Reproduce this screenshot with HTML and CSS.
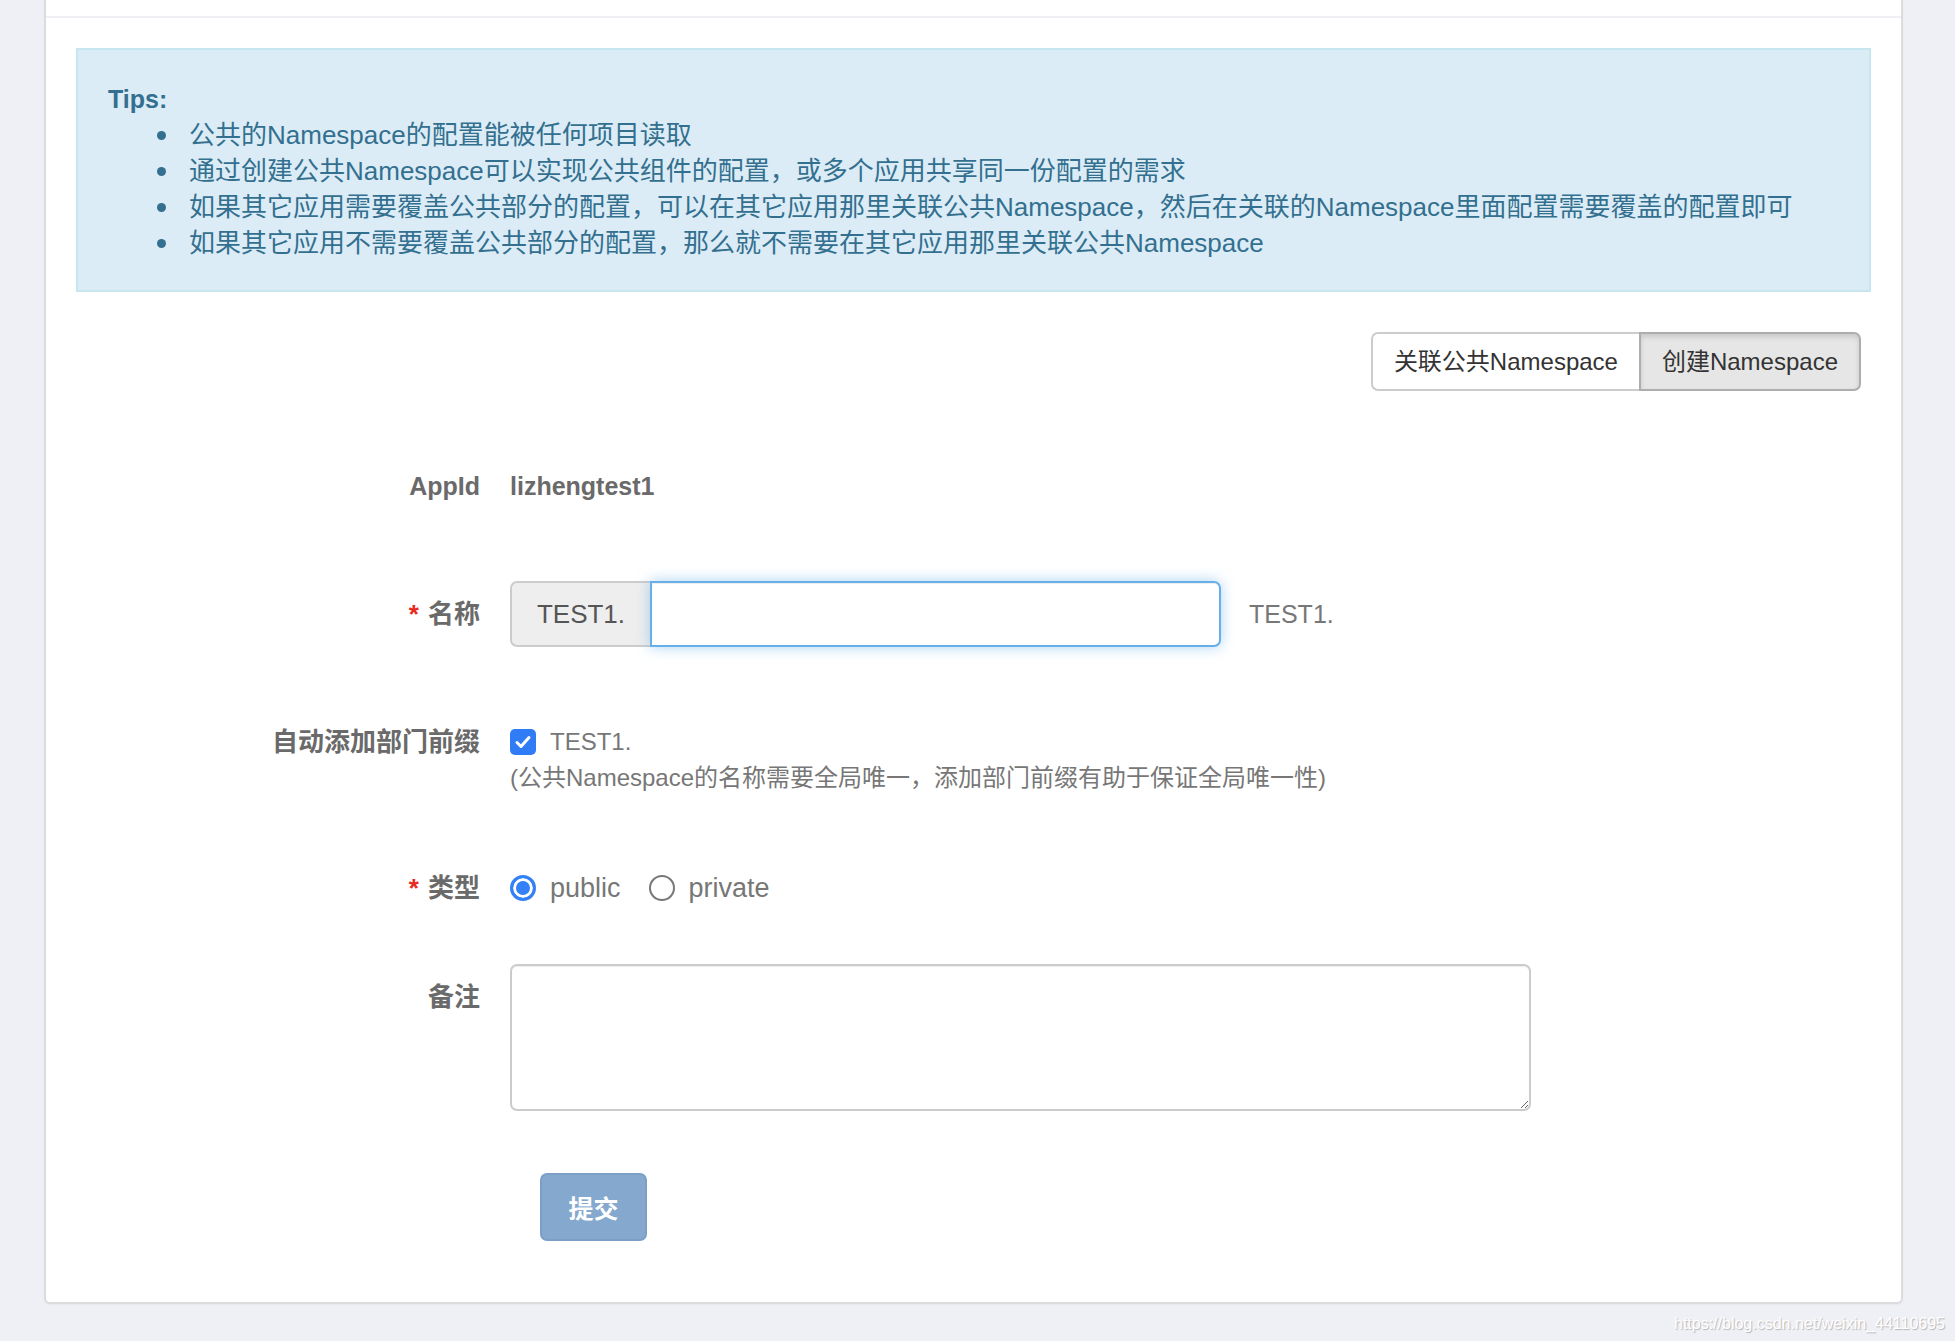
FILE: index.html
```html
<!DOCTYPE html>
<html lang="zh-CN">
<head>
<meta charset="utf-8">
<title>创建Namespace</title>
<link rel="stylesheet" href="styles.css">
</head>
<body>
<div class="panel">
  <div class="panel-heading"></div>
  <div class="panel-body">
    <div class="alert">
      <div class="alert-title">Tips:</div>
      <ul class="alert-list">
        <li>公共的Namespace的配置能被任何项目读取</li>
        <li>通过创建公共Namespace可以实现公共组件的配置，或多个应用共享同一份配置的需求</li>
        <li>如果其它应用需要覆盖公共部分的配置，可以在其它应用那里关联公共Namespace，然后在关联的Namespace里面配置需要覆盖的配置即可</li>
        <li>如果其它应用不需要覆盖公共部分的配置，那么就不需要在其它应用那里关联公共Namespace</li>
      </ul>
    </div>

    <div class="toolbar">
      <div class="btn-group">
        <button class="btn">关联公共Namespace</button>
        <button class="btn active">创建Namespace</button>
      </div>
    </div>

    <form class="form">
      <div class="form-row row-appid">
        <label class="control-label latin">AppId</label>
        <div class="control static">lizhengtest1</div>
      </div>

      <div class="form-row row-name">
        <label class="control-label"><span class="req">*</span> 名称</label>
        <div class="control inline">
          <div class="input-group">
            <span class="addon">TEST1.</span>
            <input class="input focus" type="text">
          </div>
          <span class="muted preview">TEST1.</span>
        </div>
      </div>

      <div class="form-row row-prefix">
        <label class="control-label">自动添加部门前缀</label>
        <div class="control">
          <div class="check-line">
            <span class="checkbox"><svg width="26" height="26" viewBox="0 0 26 26"><path d="M7 13.5 L11 17.5 L19 8.5" fill="none" stroke="#fff" stroke-width="3" stroke-linecap="round" stroke-linejoin="round"/></svg></span>
            <span class="muted small">TEST1.</span>
          </div>
          <div class="help">(公共Namespace的名称需要全局唯一，添加部门前缀有助于保证全局唯一性)</div>
        </div>
      </div>

      <div class="form-row row-type">
        <label class="control-label"><span class="req">*</span> 类型</label>
        <div class="control radios">
          <span class="radio-item"><span class="radio on"></span><span class="muted radio-text">public</span></span>
          <span class="radio-item"><span class="radio"></span><span class="muted radio-text">private</span></span>
        </div>
      </div>

      <div class="form-row row-note">
        <label class="control-label">备注</label>
        <div class="control">
          <textarea class="textarea"></textarea>
        </div>
      </div>

      <div class="form-row row-submit">
        <span></span>
        <div class="control">
          <button type="button" class="btn-submit">提交</button>
        </div>
      </div>
    </form>
  </div>
</div>
<div class="watermark">https://blog.csdn.net/weixin_44110695</div>
</body>
</html>
```

FILE: styles.css
```css
html, body {
  margin: 0;
  padding: 0;
}
body {
  background: #eff0f5;
  font-family: "Liberation Sans", "Noto Sans CJK SC", sans-serif;
  font-size: 25px;
  line-height: 36px;
  color: #333;
  height: 1341px;
  overflow: hidden;
}

.panel {
  margin-left: 44px;
  width: 1859px;
  box-sizing: border-box;
  background: #fff;
  border: 2px solid #dcdcdf;
  border-top: none;
  border-radius: 0 0 6px 6px;
  box-shadow: 0 1px 2px rgba(0,0,0,0.04);
}
.panel-heading {
  height: 16px;
  border-bottom: 2px solid #efeff4;
}
.panel-body {
  padding: 30px 30px 61px 30px;
}

.alert {
  background: #dcecf6;
  border: 2px solid #c6e6f0;
  color: #33708f;
  padding: 31px 30px 29px 30px;
  font-size: 26px;
}
.alert-title {
  font-weight: bold;
  font-size: 25px;
}
.alert-list {
  margin: 0;
  padding-left: 49px;
  list-style: none;
}
.alert-list li {
  display: flex;
  align-items: center;
}
.alert-list li::before {
  content: "";
  flex: none;
  width: 9px;
  height: 9px;
  border-radius: 50%;
  background: #33708f;
  margin-right: 23px;
}

.toolbar {
  margin-top: 40px;
  display: flex;
  justify-content: flex-end;
  padding-right: 10px;
}
.btn-group {
  display: flex;
}
.btn {
  font-family: inherit;
  font-size: 24px;
  line-height: 36px;
  color: #333;
  background: #fff;
  border: 2px solid #cccccc;
  padding: 10px 21px 9px 21px;
  margin: 0;
  cursor: pointer;
}
.btn:first-child {
  border-radius: 7px 0 0 7px;
  border-right: none;
}
.btn.active {
  background: #e6e6e6;
  border-color: #adadad;
  border-radius: 0 7px 7px 0;
  box-shadow: inset 0 3px 5px rgba(0,0,0,0.125);
}

.form-row {
  display: grid;
  grid-template-columns: 404px 1fr;
  column-gap: 30px;
  align-items: center;
}
.control-label {
  text-align: right;
  font-weight: bold;
  color: #6a6a6a;
  font-size: 26px;
}
.control-label.latin {
  font-size: 25px;
}
.req {
  color: #e8291c;
  margin-right: 2px;
}
.static {
  font-weight: bold;
  color: #6a6a6a;
}
.muted {
  color: #777;
}

.row-appid { margin-top: 77px; }
.row-name { margin-top: 77px; }
.row-prefix { margin-top: 77px; align-items: start; }
.row-type { margin-top: 74px; }
.row-note { margin-top: 58px; align-items: start; }
.row-note .control-label { padding-top: 15px; }
.row-submit { margin-top: 62px; }

.inline {
  display: flex;
  align-items: center;
}
.input-group {
  display: flex;
  width: 711px;
  height: 66px;
}
.addon {
  box-sizing: border-box;
  width: 140px;
  display: flex;
  align-items: center;
  justify-content: center;
  background: #eeeeee;
  border: 2px solid #cccccc;
  border-right: none;
  border-radius: 7px 0 0 7px;
  color: #555;
  font-size: 26px;
}
.input {
  flex: 1;
  box-sizing: border-box;
  height: 66px;
  margin: 0;
  border: 2px solid #66afe9;
  border-radius: 0 7px 7px 0;
  outline: none;
  font-family: inherit;
  font-size: 25px;
  padding: 0 22px;
  box-shadow: inset 0 1px 1px rgba(0,0,0,0.075), 0 0 14px rgba(102,175,233,0.55);
}
.preview {
  margin-left: 28px;
}

.check-line {
  display: flex;
  align-items: center;
  gap: 14px;
}
.checkbox {
  width: 26px;
  height: 26px;
  border-radius: 5px;
  background: #2f7cf6;
  display: inline-flex;
}
.small {
  font-size: 24px;
}
.help {
  color: #777;
  font-size: 24px;
}

.radios {
  display: flex;
  align-items: center;
  gap: 28px;
}
.radio-item {
  display: inline-flex;
  align-items: center;
  gap: 14px;
}
.radio-text {
  font-size: 27px;
}
.radio {
  box-sizing: border-box;
  width: 26px;
  height: 26px;
  border-radius: 50%;
  border: 2px solid #777;
  background: #fff;
}
.radio.on {
  border: 3px solid #3380f7;
  background: #3380f7;
  box-shadow: inset 0 0 0 3px #fff;
}

.textarea {
  display: block;
  box-sizing: border-box;
  width: 1021px;
  height: 147px;
  margin: 0;
  border: 2px solid #cccccc;
  border-radius: 7px;
  box-shadow: inset 0 1px 1px rgba(0,0,0,0.075);
  font-family: inherit;
  font-size: 25px;
  padding: 10px 20px;
  resize: vertical;
}

.btn-submit {
  margin-left: 30px;
  width: 107px;
  height: 68px;
  background: #85a8ce;
  border: 2px solid #7c9fc8;
  border-radius: 7px;
  color: #fff;
  font-family: inherit;
  font-size: 25px;
  font-weight: bold;
  padding: 0;
}

.watermark {
  text-align: right;
  padding-right: 10px;
  margin-top: 8px;
  font-size: 16px;
  line-height: 24px;
  color: #fff;
  text-shadow: 1px 1px 1px #b5b5b8;
}
```
